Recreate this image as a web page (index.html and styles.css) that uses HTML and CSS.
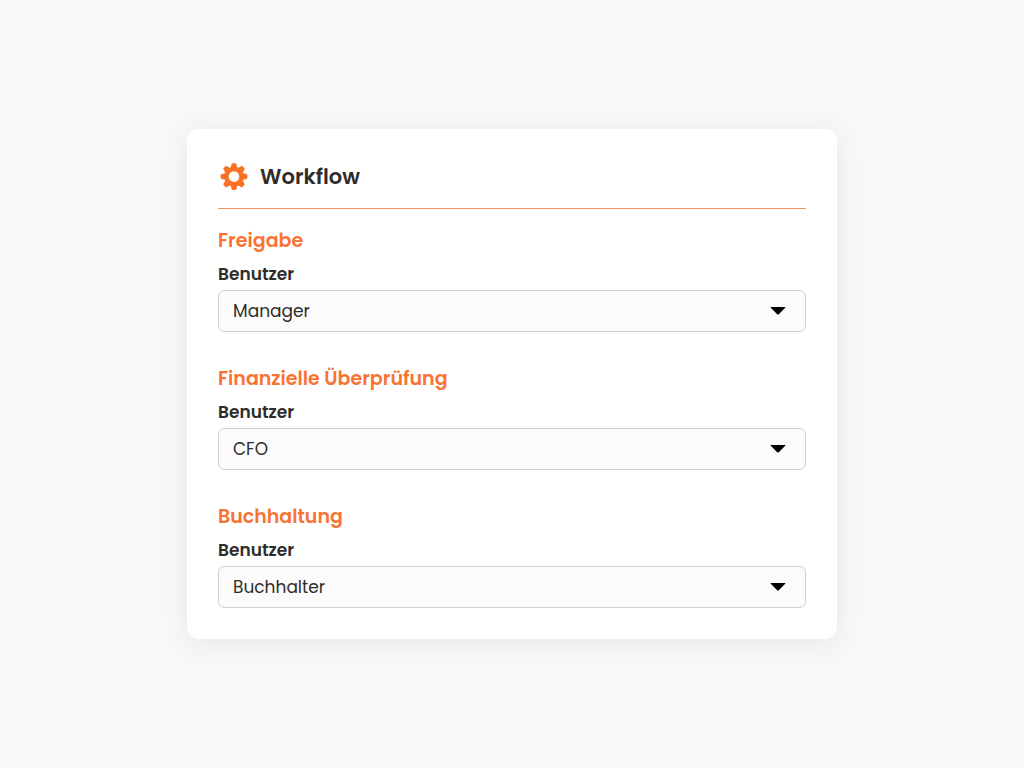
FILE: index.html
```html
<!DOCTYPE html>
<html lang="de">
<head>
<meta charset="utf-8">
<meta name="viewport" content="width=device-width, initial-scale=1">
<title>Workflow</title>
<link rel="stylesheet" href="styles.css">
</head>
<body>
<main class="card">
  <header class="card-header">
    <svg class="gear" viewBox="0 0 32 32" aria-hidden="true">
      <defs>
        <mask id="hole">
          <rect width="32" height="32" fill="#fff"/>
          <circle cx="16" cy="15.6" r="5.3" fill="#000"/>
        </mask>
      </defs>
      <g mask="url(#hole)" fill="currentColor">
        <circle cx="16" cy="15.6" r="9.8"/>
        <path id="teeth" d="M15 2.2h2q1.2 0 1.5 1.2l1 4.2v16l-1 4.2q-.3 1.2-1.5 1.2h-2q-1.2 0-1.5-1.2l-1-4.2v-16l1-4.2q.3-1.2 1.5-1.2z"/>
        <use href="#teeth" transform="rotate(45 16 15.6)"/>
        <use href="#teeth" transform="rotate(90 16 15.6)"/>
        <use href="#teeth" transform="rotate(135 16 15.6)"/>
      </g>
    </svg>
    <h1 class="card-title">Workflow</h1>
  </header>
  <form class="steps">
    <section class="step">
      <h2 class="step-title">Freigabe</h2>
      <label class="step-label" for="approval">Benutzer</label>
      <div class="select-wrap">
        <select class="select" id="approval"><option>Manager</option></select>
        <svg class="caret" viewBox="0 0 16 8" aria-hidden="true"><path d="M.9 0h14.2q.6.2.1.8L8.8 7.3q-.8.7-1.6 0L.8.8Q.3.2.9 0z"/></svg>
      </div>
    </section>
    <section class="step">
      <h2 class="step-title">Finanzielle Überprüfung</h2>
      <label class="step-label" for="finance">Benutzer</label>
      <div class="select-wrap">
        <select class="select" id="finance"><option>CFO</option></select>
        <svg class="caret" viewBox="0 0 16 8" aria-hidden="true"><path d="M.9 0h14.2q.6.2.1.8L8.8 7.3q-.8.7-1.6 0L.8.8Q.3.2.9 0z"/></svg>
      </div>
    </section>
    <section class="step">
      <h2 class="step-title">Buchhaltung</h2>
      <label class="step-label" for="accounting">Benutzer</label>
      <div class="select-wrap">
        <select class="select" id="accounting"><option>Buchhalter</option></select>
        <svg class="caret" viewBox="0 0 16 8" aria-hidden="true"><path d="M.9 0h14.2q.6.2.1.8L8.8 7.3q-.8.7-1.6 0L.8.8Q.3.2.9 0z"/></svg>
      </div>
    </section>
  </form>
</main>
</body>
</html>
```
FILE: styles.css
```css
* {
  box-sizing: border-box;
}

body {
  margin: 0;
  min-height: 100vh;
  display: flex;
  align-items: center;
  justify-content: center;
  background: #f8f8f8;
  color: #2f2c2a;
  font-family: Poppins, Inter, "Open Sans", sans-serif;
}

.card {
  width: 100%;
  max-width: 650px;
  padding: 32px 31px 31px;
  border-radius: 12px;
  background: #fff;
  box-shadow: 0 4px 28px rgba(0, 0, 0, 0.07);
}

.card-header {
  display: flex;
  align-items: center;
  gap: 10px;
  padding-bottom: 15px;
  border-bottom: 1px solid #fb9460;
}

.gear {
  width: 32px;
  height: 32px;
  color: #f97125;
}

.card-title {
  margin: 0;
  font-size: 21px;
  line-height: 32px;
  font-weight: 600;
}

.steps {
  display: flex;
  flex-direction: column;
  gap: 33px;
  padding-top: 18px;
}

.step {
  display: flex;
  flex-direction: column;
}

.step-title {
  margin: 0 0 7px;
  color: #f97332;
  font-size: 19px;
  line-height: 28px;
  font-weight: 600;
}

.step-label {
  margin-bottom: 4px;
  font-size: 17px;
  line-height: 24px;
  font-weight: 600;
}

.select-wrap {
  position: relative;
}

.select {
  display: block;
  width: 100%;
  height: 42px;
  padding: 0 48px 0 14px;
  border: 1px solid #d0d0d0;
  border-radius: 6px;
  background: #fbfbfb;
  color: inherit;
  font: inherit;
  font-size: 17px;
  appearance: none;
}

.caret {
  position: absolute;
  top: 17px;
  right: 20px;
  width: 16px;
  height: 8px;
  pointer-events: none;
}
```
